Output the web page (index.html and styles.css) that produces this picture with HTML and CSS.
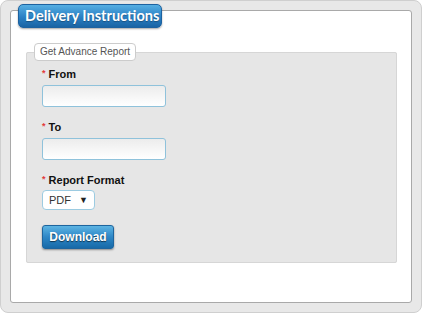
FILE: index.html
```html
<!DOCTYPE html>
<html lang="en">
  <head>
    <meta charset="UTF-8" />
    <meta name="viewport" content="width=device-width, initial-scale=1.0" />
    <title>Delivery Instructions</title>
    <link rel="stylesheet" href="styles.css">
  </head>
  <body>
    <div class="frame">
      <div class="panel">
        <div class="panel-tab">Delivery Instructions</div>

        <fieldset class="report">
          <legend>Get Advance Report</legend>
          <div class="report-body">
            <label class="field-label" for="fromDate"><span class="req">*</span> From</label>
            <input type="text" id="fromDate" class="field-input" />

            <label class="field-label" for="toDate"><span class="req">*</span> To</label>
            <input type="text" id="toDate" class="field-input" />

            <label class="field-label label-format" for="format"><span class="req">*</span> Report Format</label>
            <div class="select-box">
              <select id="format">
                <option>PDF</option>
                <option>XLS</option>
                <option>CSV</option>
              </select>
              <span class="select-arrow">&#9660;</span>
            </div>

            <button class="btn-download" onclick="downloadReport()">Download</button>
          </div>
        </fieldset>
      </div>
    </div>

    <script>
      function downloadReport() {
        let from = document.getElementById("fromDate").value;
        let to = document.getElementById("toDate").value;
        let format = document.getElementById("format").value;
        console.log("report", from, to, format);
      }
    </script>
  </body>
</html>
```

FILE: styles.css
```css
/* Global Styles */
* {
  box-sizing: border-box;
}

body {
  margin: 0;
  font-family: "Liberation Sans", Arial, sans-serif;
  background: #ffffff;
}

.frame {
  display: flex;
  flex-direction: column;
  width: 422px;
  height: 313px;
  padding: 9px;
  background: #e8e8e8;
  border: 1px solid #cfcfcf;
  border-radius: 8px;
}

.panel {
  position: relative;
  flex: 1;
  background: #ffffff;
  border: 1px solid #a9a9a9;
  border-radius: 3px;
  padding-top: 32px;
}

.panel-tab {
  position: absolute;
  top: -7px;
  left: 7px;
  width: 144px;
  height: 24px;
  line-height: 22px;
  padding-left: 6px;
  white-space: nowrap;
  font-family: "Lato", "Liberation Sans", sans-serif;
  font-size: 14.5px;
  font-weight: bold;
  color: #ffffff;
  text-shadow: 0 1px 1px rgba(0, 0, 0, 0.3);
  background: linear-gradient(#55aee2, #2a80c4 55%, #1a64a4);
  border: 1px solid #1d62a0;
  border-radius: 5px;
  box-shadow: 0 1px 2px rgba(0, 0, 0, 0.35);
}

.report {
  margin: 0 14px 0 15px;
  padding: 0 0 13px 7px;
  background: #e6e6e6;
  border: 1px solid #d6d6d6;
  border-radius: 2px;
}

.report legend {
  height: 18px;
  padding: 0 5px;
  line-height: 16px;
  font-size: 10px;
  color: #555555;
  background: #ffffff;
  border: 1px solid #cccccc;
  border-radius: 4px;
}

.report-body {
  display: flex;
  flex-direction: column;
  align-items: flex-start;
  padding: 6px 0 0 8px;
}

.field-label {
  height: 14px;
  font-size: 11px;
  line-height: 14px;
  font-weight: bold;
  color: #111111;
  margin-bottom: 4px;
}

.req {
  color: #e23a3a;
  font-size: 9px;
  line-height: 1;
  vertical-align: 2px;
}

.field-input {
  width: 124px;
  height: 22px;
  margin: 0 0 13px;
  border: 1px solid #8fc2db;
  border-radius: 3px;
  background: linear-gradient(#ececec, #ffffff);
}

.label-format {
  margin-bottom: 3px;
}

.select-box {
  display: flex;
  align-items: center;
  width: 53px;
  height: 20px;
  border: 1px solid #9ccbe1;
  border-radius: 4px;
  background: #ffffff;
}

.select-box select {
  appearance: none;
  width: 36px;
  border: none;
  background: none;
  padding: 0 0 0 6px;
  font-family: "Liberation Sans", Arial, sans-serif;
  font-size: 11px;
  color: #333333;
}

.select-arrow {
  font-size: 9px;
  color: #222222;
}

.btn-download {
  margin-top: 15px;
  width: 72px;
  height: 24px;
  padding: 0;
  font-family: "Liberation Sans", Arial, sans-serif;
  font-size: 12px;
  font-weight: bold;
  color: #ffffff;
  text-shadow: 0 1px 1px rgba(0, 0, 0, 0.6);
  background: linear-gradient(#5db4e3, #2d86c6 50%, #176aa8);
  border: 1px solid #1e659e;
  border-radius: 3px;
  box-shadow: 0 1px 2px rgba(0, 0, 0, 0.4);
  cursor: pointer;
}
```
